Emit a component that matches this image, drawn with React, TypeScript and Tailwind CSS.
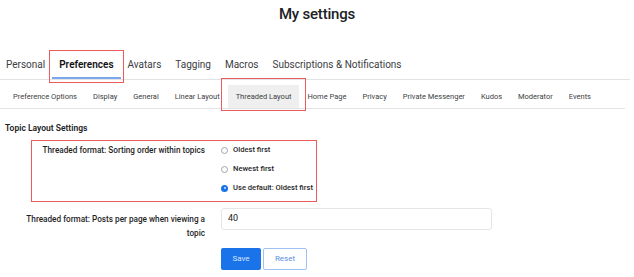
const mainTabs = ["Personal", "Preferences", "Avatars", "Tagging", "Macros", "Subscriptions & Notifications"];

const subTabs = [
  "Preference Options",
  "Display",
  "General",
  "Linear Layout",
  "Threaded Layout",
  "Home Page",
  "Privacy",
  "Private Messenger",
  "Kudos",
  "Moderator",
  "Events",
];

const sortOptions = [
  { label: "Oldest first", checked: false },
  { label: "Newest first", checked: false },
  { label: "Use default: Oldest first", checked: true },
];

function Radio({ checked }: { checked: boolean }) {
  if (checked) {
    return (
      <span className="flex h-[7px] w-[7px] items-center justify-center rounded-full bg-[#1a73e8]">
        <span className="h-[2px] w-[2px] rounded-full bg-[#cfe2ff]" />
      </span>
    );
  }
  return <span className="h-[7px] w-[7px] rounded-full border border-[#a0a4a8] bg-white" />;
}

export default function App() {
  return (
    <div className="h-[277px] w-[634px] overflow-hidden bg-white font-['Roboto',sans-serif] text-[#202124]">
      {/* page title */}
      <div className="flex h-[50px] justify-center pt-[5px]">
        <h1 className="text-[15px] font-medium leading-[18px] tracking-[-0.2px]">My settings</h1>
      </div>

      {/* main tabs */}
      <div className="mr-[4px] flex h-[30px] border-b border-[#e3e3e3]">
        {mainTabs.map((tab) => {
          const active = tab === "Preferences";
          return (
            <div
              key={tab}
              className={
                active
                  ? "relative flex items-center px-[7px] text-[10px] font-semibold text-[#111]"
                  : "relative flex items-center px-[7px] text-[10px] text-[#3c4043] first:pl-[6px]"
              }
            >
              {tab}
              {active && (
                <>
                  <span className="absolute bottom-0 left-0 right-0 h-[2px] bg-[#7aa7ee]" />
                  <span className="absolute -bottom-[4px] -left-[3px] -right-[3px] top-0 border border-[#ec5b5b]" />
                </>
              )}
            </div>
          );
        })}
      </div>

      {/* sub tabs */}
      <div className="mr-[9px] flex border-b border-[#e3e3e3] pl-[5px] pt-[5px]">
        {subTabs.map((tab) => {
          const active = tab === "Threaded Layout";
          return (
            <div
              key={tab}
              className={
                active
                  ? "relative flex h-[23px] items-center bg-[#efefef] px-[8px] text-[7.5px] text-[#3c4043]"
                  : "flex h-[23px] items-center px-[8px] text-[7.5px] text-[#3c4043]"
              }
            >
              {tab}
              {active && (
                <span className="absolute -bottom-[3px] -left-[7px] -right-[7px] -top-[7px] border border-[#ec5b5b]" />
              )}
            </div>
          );
        })}
      </div>

      {/* topic layout form */}
      <div className="pl-[5px] pt-[13px]">
        <h2 className="text-[8.5px] font-semibold leading-[12px]">Topic Layout Settings</h2>

        <div className="mt-[7px] grid grid-cols-[187px_271px] gap-x-[16px] pl-[13px] text-[8.2px]">
          <div className="relative pt-[4px] text-right font-medium leading-[10px] text-[#1f1f1f]">
            Threaded format: Sorting order within topics
            <span className="absolute left-[13px] top-[-1px] h-[62px] w-[286px] border border-[#ec5b5b]" />
          </div>
          <div className="flex flex-col gap-[9px] pt-[4px]">
            {sortOptions.map((opt) => (
              <label
                key={opt.label}
                className="flex h-[10px] items-center gap-[5px] text-[7.6px] font-medium text-[#1f1f1f]"
              >
                <Radio checked={opt.checked} />
                {opt.label}
              </label>
            ))}
          </div>

          <div className="mt-[15px] pt-[4px] text-right font-medium leading-[14px] text-[#1f1f1f]">
            Threaded format: Posts per page when viewing a topic
          </div>
          <div className="mt-[15px]">
            <div className="flex h-[22px] items-center rounded-[3px] border border-[#e6e6e6] px-[6px] text-[9px]">
              40
            </div>
          </div>

          <div />
          <div className="mt-[8px] flex gap-[2px]">
            <button className="h-[22px] w-[40px] rounded-[2px] bg-[#1a73e8] text-[8px] text-[#d6e6ff]">Save</button>
            <button className="h-[22px] w-[44px] rounded-[2px] border border-[#9fc1f5] bg-white text-[8px] text-[#5b8fe0]">
              Reset
            </button>
          </div>
        </div>
      </div>
    </div>
  );
}
